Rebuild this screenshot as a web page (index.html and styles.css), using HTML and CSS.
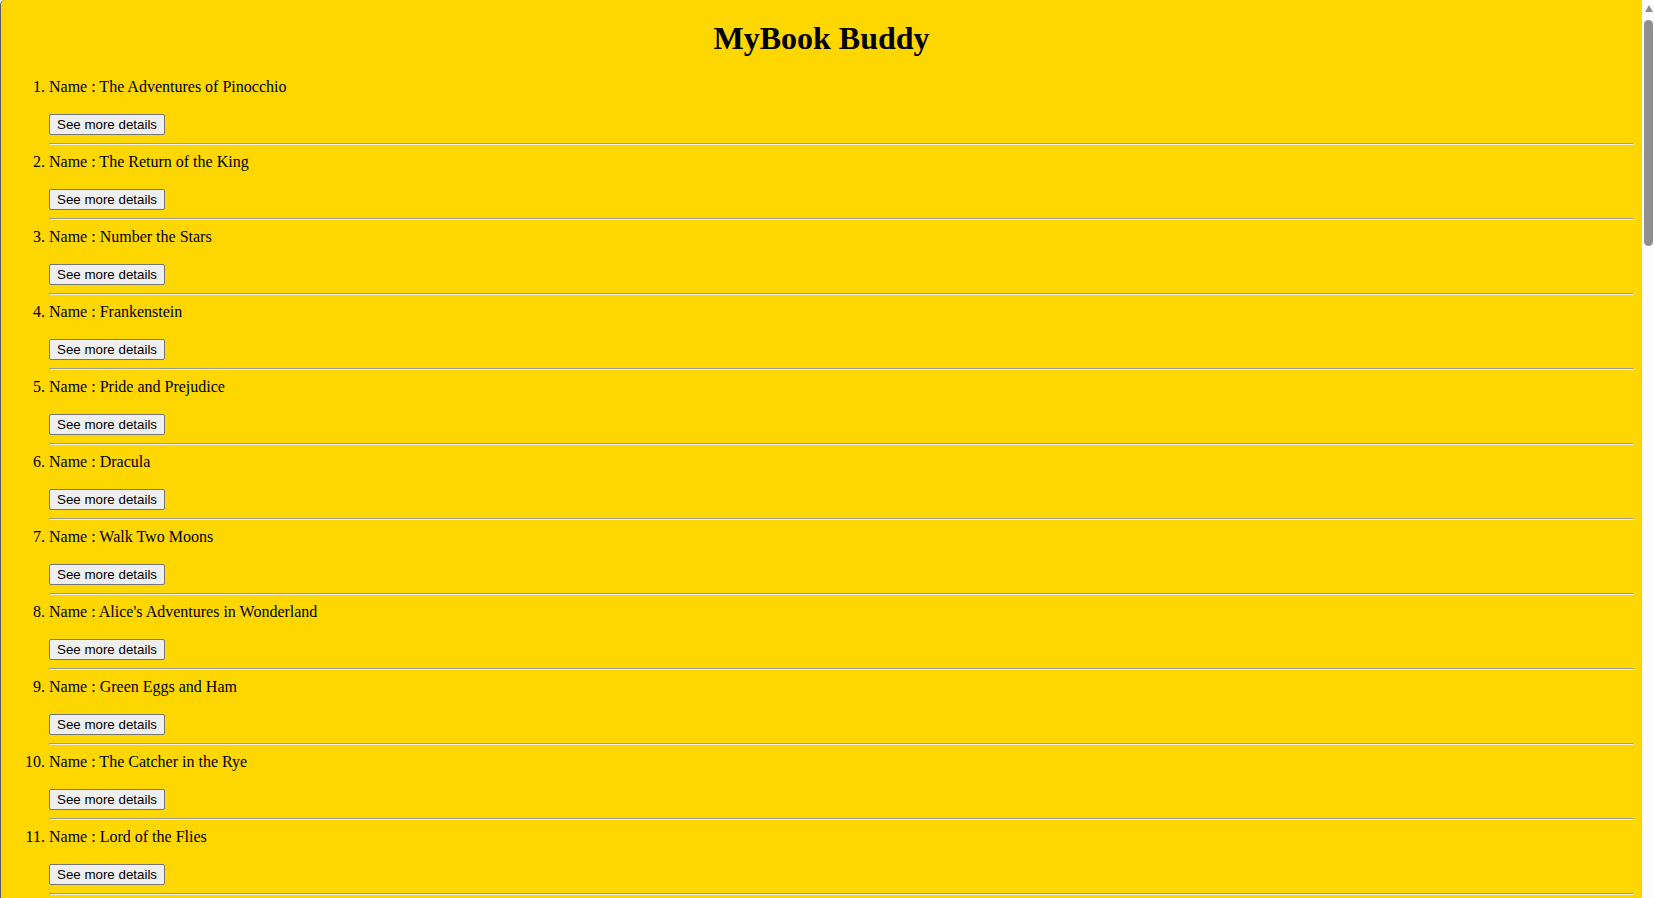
FILE: index.html
```html
<!DOCTYPE html>
<html lang="en">
<head>
<meta charset="utf-8">
<title>MyBook Buddy</title>
<link rel="stylesheet" href="styles.css">
</head>
<body>
<div class="frame">
  <div class="page">
    <h1 class="title">MyBook Buddy</h1>
    <ol class="books">
      <li class="book"><div class="name">Name : The Adventures of Pinocchio</div><div class="actions"><button class="details">See more details</button></div><hr class="rule"></li>
      <li class="book"><div class="name">Name : The Return of the King</div><div class="actions"><button class="details">See more details</button></div><hr class="rule"></li>
      <li class="book"><div class="name">Name : Number the Stars</div><div class="actions"><button class="details">See more details</button></div><hr class="rule"></li>
      <li class="book"><div class="name">Name : Frankenstein</div><div class="actions"><button class="details">See more details</button></div><hr class="rule"></li>
      <li class="book"><div class="name">Name : Pride and Prejudice</div><div class="actions"><button class="details">See more details</button></div><hr class="rule"></li>
      <li class="book"><div class="name">Name : Dracula</div><div class="actions"><button class="details">See more details</button></div><hr class="rule"></li>
      <li class="book"><div class="name">Name : Walk Two Moons</div><div class="actions"><button class="details">See more details</button></div><hr class="rule"></li>
      <li class="book"><div class="name">Name : Alice's Adventures in Wonderland</div><div class="actions"><button class="details">See more details</button></div><hr class="rule"></li>
      <li class="book"><div class="name">Name : Green Eggs and Ham</div><div class="actions"><button class="details">See more details</button></div><hr class="rule"></li>
      <li class="book"><div class="name">Name : The Catcher in the Rye</div><div class="actions"><button class="details">See more details</button></div><hr class="rule"></li>
      <li class="book"><div class="name">Name : Lord of the Flies</div><div class="actions"><button class="details">See more details</button></div><hr class="rule"></li>
    </ol>
  </div>
</div>
<div class="scrollbar" aria-hidden="true">
  <svg class="scroll-up" width="12" height="18" viewBox="0 0 12 18"><path d="M3 12 L7 5 L11 12 Z" fill="#8f8f8f"/></svg>
  <div class="scroll-thumb"></div>
</div>
</body>
</html>
```
FILE: styles.css
```css
html {
  height: 100%;
  background: #fcfcfc;
}

body {
  margin: 0;
  height: 100%;
  overflow: hidden;
  display: flex;
  font-family: "Liberation Serif", "Times New Roman", serif;
  font-size: 16px;
  color: #000;
}

.frame {
  flex: 1;
  min-width: 0;
  overflow: hidden;
  background: #ffd700;
  border-left: 1px solid #5f5f5f;
  border-top-left-radius: 5px;
}

.page {
  margin: 8px;
}

.title {
  font-size: 32px;
  font-weight: bold;
  text-align: center;
  margin: 19.5px 0 21.44px;
  line-height: normal;
}

.books {
  margin: 0;
  padding-left: 40px;
}

.book {
  line-height: 18px;
}

.name {
  height: 18px;
}

.actions {
  display: flex;
  margin-top: 18px;
}

.details {
  box-sizing: border-box;
  height: 21px;
  font-family: "Liberation Sans", Arial, sans-serif;
  font-size: 13.3333px;
  line-height: 15px;
  color: #000;
  background: #efefef;
  border: 1px solid #767676;
  border-radius: 2px;
  padding: 1px 7px;
}

.rule {
  margin: 8px 0;
  border-style: solid;
  border-width: 1px;
  border-color: #9a9a9a #eeeeee #eeeeee #9a9a9a;
  height: 0;
}

.scrollbar {
  flex: 0 0 12px;
  display: flex;
  flex-direction: column;
  background: #fcfcfc;
}

.scroll-up {
  display: block;
  flex: 0 0 18px;
}

.scroll-thumb {
  margin: 2px 1px 0 2px;
  height: 226px;
  border-radius: 5px;
  background: #8f8f8f;
}
```
